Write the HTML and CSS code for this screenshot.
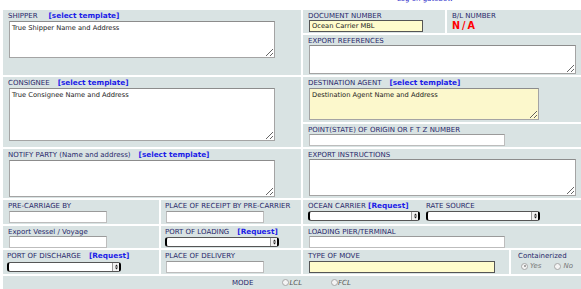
FILE: index.html
```html
<!DOCTYPE html>
<html>
<head>
<meta charset="utf-8">
<link rel="stylesheet" href="styles.css">
</head>
<body>
<div class="top"><span class="logon">Log on gatebow</span></div>
<div class="form">
  <div class="cell c-shipper">
    <div class="lbl">SHIPPER<a class="tpl tpl-wide">[select template]</a></div>
    <textarea class="ta ta-ship">True Shipper Name and Address</textarea>
  </div>
  <div class="cell c-doc">
    <div class="lbl">DOCUMENT NUMBER</div>
    <input class="in yellow w-doc" value="Ocean Carrier MBL">
  </div>
  <div class="cell c-bl">
    <div class="lbl">B/L NUMBER</div>
    <div class="na">N/A</div>
  </div>
  <div class="cell c-expref">
    <div class="lbl">EXPORT REFERENCES</div>
    <textarea class="ta ta-expref"></textarea>
  </div>
  <div class="cell c-cons">
    <div class="lbl">CONSIGNEE<a class="tpl">[select template]</a></div>
    <textarea class="ta ta-cons">True Consignee Name and Address</textarea>
  </div>
  <div class="cell c-dest">
    <div class="lbl">DESTINATION AGENT<a class="tpl">[select template]</a></div>
    <textarea class="ta ta-dest">Destination Agent Name and Address</textarea>
  </div>
  <div class="cell c-point">
    <div class="lbl">POINT(STATE) OF ORIGIN OR F T Z NUMBER</div>
    <input class="in w-long">
  </div>
  <div class="cell c-notify">
    <div class="lbl">NOTIFY PARTY (Name and address)<a class="tpl">[select template]</a></div>
    <textarea class="ta ta-notify"></textarea>
  </div>
  <div class="cell c-instr">
    <div class="lbl">EXPORT INSTRUCTIONS</div>
    <textarea class="ta ta-instr"></textarea>
  </div>

  <div class="cell c-pre">
    <div class="lbl">PRE-CARRIAGE BY</div>
    <input class="in w-short lf">
  </div>
  <div class="cell c-receipt">
    <div class="lbl">PLACE OF RECEIPT BY PRE-CARRIER</div>
    <input class="in w-short lf">
  </div>
  <div class="cell c-ocean">
    <div class="group g1">
      <div class="lbl">OCEAN CARRIER <a class="req req-tight">[Request]</a></div>
      <div class="sel w-sel1"><span class="sel-fill"></span><span class="sel-arr"><svg width="3" height="6" viewBox="0 0 3 6"><path d="M0 2.6L1.5 0.4L3 2.6ZM0 3.4L1.5 5.6L3 3.4Z" fill="#222"/></svg></span></div>
    </div>
    <div class="group g2">
      <div class="lbl">RATE SOURCE</div>
      <div class="sel w-sel2"><span class="sel-fill"></span><span class="sel-arr"><svg width="3" height="6" viewBox="0 0 3 6"><path d="M0 2.6L1.5 0.4L3 2.6ZM0 3.4L1.5 5.6L3 3.4Z" fill="#222"/></svg></span></div>
    </div>
  </div>

  <div class="cell c-vessel">
    <div class="lbl">Export Vessel / Voyage</div>
    <input class="in w-short">
  </div>
  <div class="cell c-loading">
    <div class="lbl">PORT OF LOADING<a class="req">[Request]</a></div>
    <div class="sel w-sel"><span class="sel-fill"></span><span class="sel-arr"><svg width="3" height="6" viewBox="0 0 3 6"><path d="M0 2.6L1.5 0.4L3 2.6ZM0 3.4L1.5 5.6L3 3.4Z" fill="#222"/></svg></span></div>
  </div>
  <div class="cell c-pier">
    <div class="lbl">LOADING PIER/TERMINAL</div>
    <input class="in w-long">
  </div>

  <div class="cell c-discharge">
    <div class="lbl">PORT OF DISCHARGE<a class="req">[Request]</a></div>
    <div class="sel w-sel sel-low"><span class="sel-fill"></span><span class="sel-arr"><svg width="3" height="6" viewBox="0 0 3 6"><path d="M0 2.6L1.5 0.4L3 2.6ZM0 3.4L1.5 5.6L3 3.4Z" fill="#222"/></svg></span></div>
  </div>
  <div class="cell c-delivery">
    <div class="lbl">PLACE OF DELIVERY</div>
    <input class="in w-short lf">
  </div>
  <div class="cell c-move">
    <div class="lbl">TYPE OF MOVE</div>
    <input class="in yellow w-move lf">
  </div>
  <div class="cell c-cont">
    <div class="lbl">Containerized</div>
    <div class="radios">
      <span class="radio on"></span><span class="rlbl">Yes</span>
      <span class="radio r-gap"></span><span class="rlbl">No</span>
    </div>
  </div>

  <div class="cell c-mode">
    <span class="mode">MODE</span>
    <span class="radio r-lcl"></span><span class="mlbl">LCL</span>
    <span class="radio r-fcl"></span><span class="mlbl">FCL</span>
  </div>
</div>
</body>
</html>
```
FILE: styles.css
```css
* { box-sizing: border-box; }
html, body {
  margin: 0;
  padding: 0;
  background: #fff;
  overflow: hidden;
}
body {
  font-family: "DejaVu Sans", Verdana, sans-serif;
  font-size: 7px;
  color: #28286a;
}
.top {
  height: 10px;
  overflow: hidden;
  padding-left: 397px;
}
.logon {
  display: block;
  color: #3535cc;
  font-size: 7px;
  line-height: 8px;
  margin-top: -5px;
}
.form {
  display: grid;
  margin-left: 3px;
  grid-template-columns: 156px 140px 142px 62px 72px;
  grid-template-rows: 23px 40px 45px 23px 49px 24px 22px 24px 16px;
  gap: 2px;
}
.cell {
  background: #d9e3e3;
  padding: 2px 0 0 5px;
  min-width: 0;
}
.lbl {
  line-height: 8px;
  height: 8px;
  white-space: nowrap;
}
.tpl, .req {
  color: #1c1ce8;
  font-weight: bold;
  font-size: 7.3px;
  margin-left: 8px;
  text-decoration: none;
}
.tpl-wide { margin-left: 11px; }
.req-tight { margin-left: 0; }

/* grid placement */
.c-shipper { grid-column: 1 / 3; grid-row: 1 / 3; }
.c-doc { grid-column: 3 / 4; grid-row: 1; }
.c-bl { grid-column: 4 / 6; grid-row: 1; }
.c-expref { grid-column: 3 / 6; grid-row: 2; }
.c-cons { grid-column: 1 / 3; grid-row: 3 / 5; }
.c-dest { grid-column: 3 / 6; grid-row: 3; }
.c-point { grid-column: 3 / 6; grid-row: 4; }
.c-notify { grid-column: 1 / 3; grid-row: 5; }
.c-instr { grid-column: 3 / 6; grid-row: 5; }
.c-pre { grid-column: 1; grid-row: 6; }
.c-receipt { grid-column: 2; grid-row: 6; padding-left: 4px; }
.c-ocean { grid-column: 3 / 6; grid-row: 6; display: flex; gap: 6px; }
.c-vessel { grid-column: 1; grid-row: 7; }
.c-loading { grid-column: 2; grid-row: 7; padding-left: 4px; }
.c-pier { grid-column: 3 / 6; grid-row: 7; }
.c-discharge { grid-column: 1; grid-row: 8; padding-left: 4px; }
.c-delivery { grid-column: 2; grid-row: 8; padding-left: 4px; }
.c-move { grid-column: 3 / 5; grid-row: 8; }
.c-cont { grid-column: 5; grid-row: 8; padding-left: 7px; }
.c-mode { grid-column: 1 / 6; grid-row: 9; display: flex; align-items: flex-start; padding-left: 229px; padding-top: 2px; }

/* textareas */
textarea.ta {
  display: block;
  font-family: "DejaVu Sans", Verdana, sans-serif;
  font-size: 6.7px;
  line-height: 8px;
  color: #1a1a1a;
  background: #fff;
  padding: 2px;
  margin: 0 0 0 1px;
  border: 1px solid #a4a4a4;
  border-top-color: #8c8c8c;
  border-radius: 0;
  outline: none;
}
.ta-ship { width: 266px; height: 37px; margin-top: 1px !important; }
.ta-cons { width: 266px; height: 53px; margin-top: 1px !important; }
.ta-notify { width: 266px; height: 37px; margin-top: 1px !important; }
.ta-expref { width: 267px; height: 29px; }
.ta-dest { width: 230px; height: 32px; margin-top: 1px !important; background: #fcf8cc !important; }
.ta-instr { width: 267px; height: 37px; }

/* inputs */
input.in {
  display: block;
  height: 12px;
  margin: 0 0 0 1px;
  padding: 0 2px;
  border: 1px solid #bdbdbd;
  border-top-color: #9a9a9a;
  background: #fff;
  font-family: "DejaVu Sans", Verdana, sans-serif;
  font-size: 6.7px;
  color: #1a1a1a;
  outline: none;
}
input.in.lf { margin-top: 1px; }
input.yellow {
  background: #fffccc;
  border: 1px solid #555;
}
.w-doc { width: 114px; }
.w-long { width: 196px; }
.w-short { width: 98px; }
.w-move { width: 186px; }

.na {
  color: #ff0000;
  font-weight: bold;
  font-size: 9.6px;
  line-height: 10px;
  letter-spacing: 2px;
  margin-top: 1px;
}

/* select look-alike */
.sel {
  display: flex;
  height: 10px;
  margin-top: 1px;
  background: #fff;
  border: 1px solid #555;
  border-left: 2px solid #000;
  border-right: 2px solid #000;
  border-radius: 3px;
}
.sel-low { margin-top: 2px; }
.sel-fill { flex: 1; }
.sel-arr {
  width: 7px;
  border-left: 1px solid #9a9a9a;
  display: flex;
  align-items: center;
  justify-content: center;
  background: #f2f2f2;
}
.w-sel { width: 114px; }
.w-sel1 { width: 112px; }
.w-sel2 { width: 114px; }
.group { display: flex; flex-direction: column; }
.g1 { width: 112px; }

/* radios */
.radios {
  display: flex;
  align-items: center;
  margin-top: 2px;
  height: 8px;
}
.radio {
  display: inline-block;
  width: 7px;
  height: 7px;
  border-radius: 50%;
  border: 1px solid #a8a8a8;
  background: #f4f4f4;
  position: relative;
  flex: none;
}
.radio.on::after {
  content: "";
  position: absolute;
  left: 1.5px;
  top: 1.5px;
  width: 2px;
  height: 2px;
  border-radius: 50%;
  background: #8a8a8a;
}
.rlbl {
  font-style: italic;
  color: #777;
  margin-left: 2px;
  line-height: 8px;
}
.r-gap { margin-left: 13px; }
.c-cont .radios { margin-left: 3px; }
.mode { line-height: 8px; margin-top: 1px; }
.r-lcl { margin-left: 29px; margin-top: 1px; }
.r-fcl { margin-left: 29px; margin-top: 1px; }
.mlbl {
  font-style: italic;
  color: #555;
  line-height: 8px;
  margin-left: 0;
  margin-top: 1px;
}
```
